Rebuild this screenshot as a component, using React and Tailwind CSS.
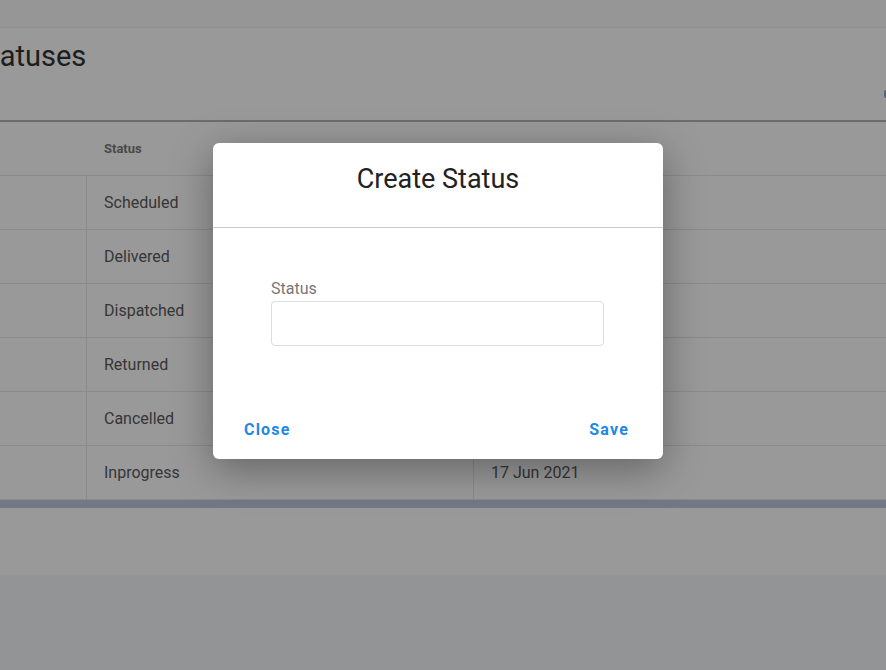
import React from 'react';

const rows = [
  { status: 'Scheduled', date: '17 Jun 2021' },
  { status: 'Delivered', date: '17 Jun 2021' },
  { status: 'Dispatched', date: '17 Jun 2021' },
  { status: 'Returned', date: '17 Jun 2021' },
  { status: 'Cancelled', date: '17 Jun 2021' },
  { status: 'Inprogress', date: '17 Jun 2021' },
];

const App = () => {
  return (
    <div className="relative min-h-[670px] w-[886px] overflow-hidden bg-white font-['Roboto',sans-serif]">
      {/* Page behind the modal */}
      <div className="h-[28px] bg-[#fafafa] border-b border-[#eeeeee]" />
      <div className="relative h-[94px] bg-white border-b-2 border-[#b5b5b5]">
        <h1 className="ml-[-27px] pt-[9px] text-[29px] leading-[38px] text-[#333333]">Statuses</h1>
        <div className="absolute right-0 top-[62px] h-[8px] w-[2px] rounded-l bg-[#8fa3c8]" />
      </div>

      <div className="grid grid-cols-[86px_387px_1fr] h-[54px] border-b border-[#e6e6e6]">
        <div />
        <div className="flex items-center pl-[18px] text-[13px] font-bold text-[#7a7a7a]">Status</div>
        <div className="flex items-center pl-[17px] text-[13px] font-bold text-[#7a7a7a]">Created On</div>
      </div>
      {rows.map((row) => (
        <div key={row.status} className="grid grid-cols-[86px_387px_1fr] h-[54px] border-b border-[#e6e6e6]">
          <div />
          <div className="flex items-center border-l border-[#e6e6e6] pl-[17px] text-[16px] text-[#5a5a5a]">{row.status}</div>
          <div className="flex items-center border-l border-[#e6e6e6] pl-[17px] text-[16px] text-[#5a5a5a]">{row.date}</div>
        </div>
      ))}
      <div className="h-[8px] bg-[#c0c8e0]" />
      <div className="h-[67px] bg-white" />
      <div className="h-[95px] bg-[#f6f7f9]" />

      {/* Overlay */}
      <div className="absolute inset-0 bg-black/40" />

      {/* Modal */}
      <div className="absolute left-[213px] top-[143px] w-[450px] h-[316px] rounded-[6px] bg-white shadow-[0_10px_40px_rgba(0,0,0,0.35)] flex flex-col">
        <div className="h-[85px] flex items-center justify-center border-b border-[#cccccc] pb-[12px]">
          <h2 className="text-[27px] text-[#222222]">Create Status</h2>
        </div>
        <div className="px-[58px] pt-[51px]">
          <label className="block text-[16px] leading-[20px] text-[#777777] mb-[2px]">Status</label>
          <input
            type="text"
            className="block w-[333px] h-[45px] rounded-[4px] border border-[#dddddd] px-3 outline-none"
          />
        </div>
        <div className="mt-auto flex items-center justify-between pl-[31px] pr-[34px] pb-[17px]">
          <button className="text-[16px] font-bold tracking-[1.2px] text-[#1e88e5]">Close</button>
          <button className="text-[16px] font-bold tracking-[1.2px] text-[#1e88e5]">Save</button>
        </div>
      </div>
    </div>
  );
};

export default App;
